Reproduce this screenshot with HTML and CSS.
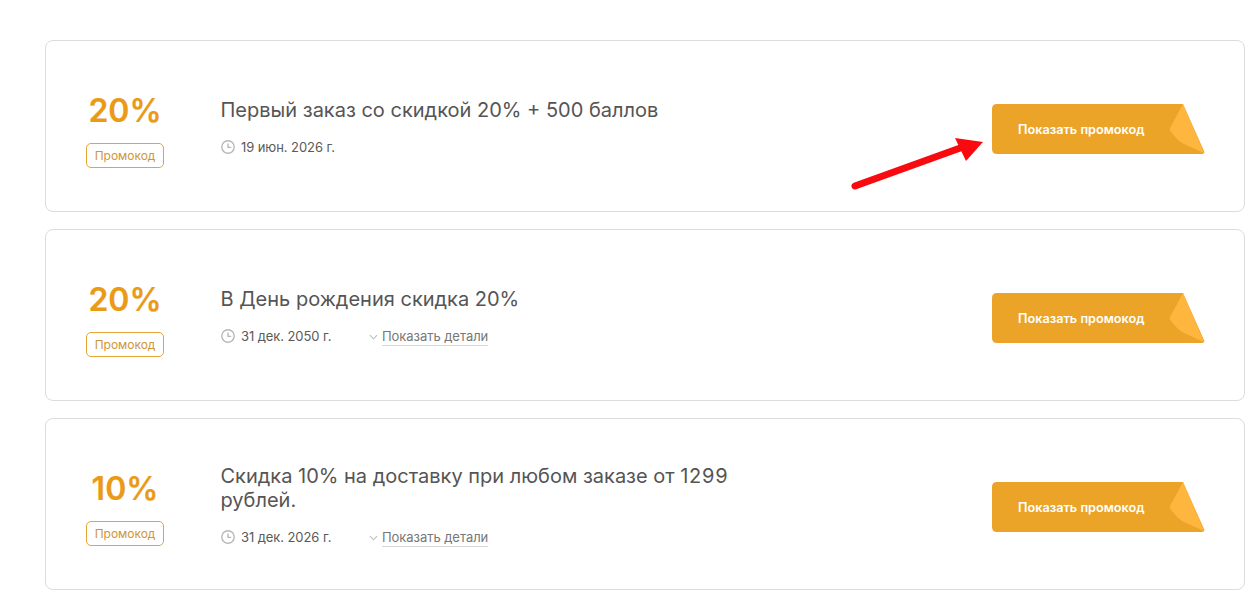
FILE: index.html
```html
<!DOCTYPE html>
<html lang="ru">
<head>
<meta charset="utf-8">
<title>Промокоды</title>
<link rel="stylesheet" href="styles.css">
</head>
<body>
<main class="list">
  <article class="card">
    <div class="deal"><div class="percent">20%</div><div class="badge">Промокод</div></div>
    <div class="info">
      <h2 class="title">Первый заказ со скидкой 20% + 500 баллов</h2>
      <div class="meta">
        <span class="date"><svg class="clock" viewBox="0 0 14 14"><circle cx="7" cy="7" r="6.2"/><path d="M7 3.4V7.4H10.2"/></svg>19 июн. 2026 г.</span>
      </div>
    </div>
    <a class="promo"><svg class="promo-bg" viewBox="0 0 213 50"><path class="promo-main" d="M5 0H191L212 47Q213 50 210 50H5Q0 50 0 45V5Q0 0 5 0Z"/><path class="promo-fold" d="M191 0L178 24Q177 26 179 28L185 35Q188 38 192 40L212 49Z"/></svg><span class="promo-text">Показать промокод</span></a>
    <svg class="arrow" viewBox="0 0 140 60"><path class="arrow-line" d="M4 48L112 9"/><path class="arrow-head" d="M104 0L132 4L115 23Z"/></svg>
  </article>
  <article class="card">
    <div class="deal"><div class="percent">20%</div><div class="badge">Промокод</div></div>
    <div class="info">
      <h2 class="title">В День рождения скидка 20%</h2>
      <div class="meta">
        <span class="date"><svg class="clock" viewBox="0 0 14 14"><circle cx="7" cy="7" r="6.2"/><path d="M7 3.4V7.4H10.2"/></svg>31 дек. 2050 г.</span>
        <span class="details"><svg class="chevron" viewBox="0 0 10 6"><path d="M1 1L5 5L9 1"/></svg><span class="details-text">Показать детали</span></span>
      </div>
    </div>
    <a class="promo"><svg class="promo-bg" viewBox="0 0 213 50"><path class="promo-main" d="M5 0H191L212 47Q213 50 210 50H5Q0 50 0 45V5Q0 0 5 0Z"/><path class="promo-fold" d="M191 0L178 24Q177 26 179 28L185 35Q188 38 192 40L212 49Z"/></svg><span class="promo-text">Показать промокод</span></a>
  </article>
  <article class="card">
    <div class="deal"><div class="percent">10%</div><div class="badge">Промокод</div></div>
    <div class="info">
      <h2 class="title">Скидка 10% на доставку при любом заказе от <span class="amount">1299</span> рублей.</h2>
      <div class="meta">
        <span class="date"><svg class="clock" viewBox="0 0 14 14"><circle cx="7" cy="7" r="6.2"/><path d="M7 3.4V7.4H10.2"/></svg>31 дек. 2026 г.</span>
        <span class="details"><svg class="chevron" viewBox="0 0 10 6"><path d="M1 1L5 5L9 1"/></svg><span class="details-text">Показать детали</span></span>
      </div>
    </div>
    <a class="promo"><svg class="promo-bg" viewBox="0 0 213 50"><path class="promo-main" d="M5 0H191L212 47Q213 50 210 50H5Q0 50 0 45V5Q0 0 5 0Z"/><path class="promo-fold" d="M191 0L178 24Q177 26 179 28L185 35Q188 38 192 40L212 49Z"/></svg><span class="promo-text">Показать промокод</span></a>
  </article>
</main>
</body>
</html>
```
FILE: styles.css
```css
* { box-sizing: border-box; }
html, body { margin: 0; background: #fff; }
body { font-family: Inter, "Noto Sans", sans-serif; overflow: hidden; height: 602px; }
.list { display: flex; flex-direction: column; gap: 17px; padding: 40px 4px 0 45px; }
.card {
  position: relative;
  display: flex;
  align-items: center;
  height: 172px;
  padding-right: 39px;
  border: 1px solid #dcdcdc;
  border-radius: 8px;
}
.deal { display: flex; flex-direction: column; align-items: center; width: 158px; margin-top: 6px; flex: none; }
.percent { font-size: 32px; line-height: 40px; font-weight: 600; color: #ea9a16; -webkit-text-stroke: 0.2px #ea9a16; }
.badge {
  margin-top: 12px;
  width: 78px;
  height: 25px;
  border: 1px solid #e6a435;
  border-radius: 5px;
  font-size: 12px;
  line-height: 23px;
  letter-spacing: -0.03px;
  text-align: center;
  color: #cf9635;
}
.info { margin-left: 16.5px; width: 540px; flex: none; }
.title { margin: 0; font-size: 20px; line-height: 24px; font-weight: 400; color: #555; }
.amount { letter-spacing: 0.75px; }
.meta { display: flex; align-items: center; height: 14px; margin-top: 18px; font-size: 13px; color: #5a5a5a; }
.date { display: flex; align-items: center; width: 148.5px; letter-spacing: -0.08px; flex: none; }
.clock { width: 14px; height: 14px; margin-right: 6.5px; fill: none; stroke: #b8b8b8; stroke-width: 1.4; }
.details { display: flex; align-items: center; margin-top: 2px; color: #777; }
.chevron { width: 9px; height: 6px; margin-right: 4px; fill: none; stroke: #bdbdbd; stroke-width: 1.2; }
.details-text { border-bottom: 1px solid #d6d6d6; line-height: 17px; letter-spacing: -0.05px; }
.promo {
  position: relative;
  display: flex;
  align-items: center;
  width: 213px;
  height: 50px;
  margin-left: auto;
  margin-top: 6px;
  padding-left: 26px;
  flex: none;
}
.promo-bg { position: absolute; left: 0; top: 0; width: 213px; height: 50px; }
.promo-main { fill: #eba427; }
.promo-fold { fill: #ffb63f; }
.promo-text { position: relative; font-size: 12.7px; font-weight: 600; color: #fff; white-space: nowrap; }
.arrow { position: absolute; left: 805px; top: 97px; width: 140px; height: 60px; }
.arrow-line { fill: none; stroke: #f80a0f; stroke-width: 7; stroke-linecap: round; }
.arrow-head { fill: #f80a0f; }
```
